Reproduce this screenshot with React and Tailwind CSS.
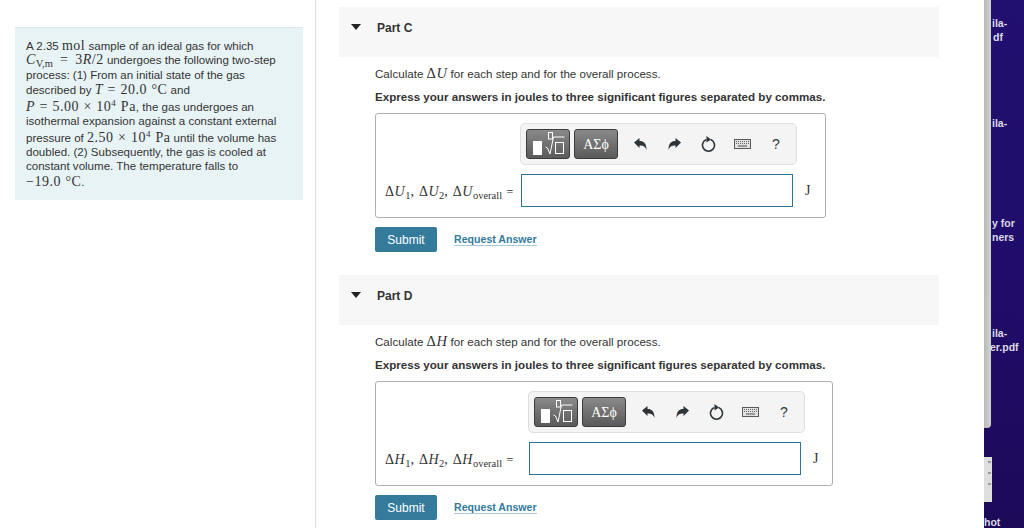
import React from 'react'

const Serif = ({ children, className = 'text-[14px]' }) => (
  <span className={`font-['Liberation_Serif',serif] tracking-[0.5px] [word-spacing:0.5px] ${className}`}>{children}</span>
)

const I = ({ children }) => <i className="font-['Liberation_Serif',serif]">{children}</i>

const Sub = ({ children }) => <sub className="static align-[-3px] text-[10.5px] not-italic leading-none tracking-normal">{children}</sub>

const Sup = ({ children }) => <sup className="static align-[5px] text-[9px] leading-none">{children}</sup>

const statement = [
  { h: 'h-[14px]', body: <>A 2.35 <Serif>mol</Serif> sample of an ideal gas for which</> },
  { h: 'h-[16px]', body: <><Serif><I>C</I><Sub>V,m</Sub><span className="mx-[7px]">=</span>3<I>R</I>/2</Serif> undergoes the following two-step</> },
  { h: 'h-[14px]', body: <>process: (1) From an initial state of the gas</> },
  { h: 'h-[17px]', body: <>described by <Serif><I>T</I> = 20.0 °C</Serif> and</> },
  { h: 'h-[15px]', body: <><Serif><I>P</I> = 5.00 × 10<Sup>4</Sup> Pa</Serif>, the gas undergoes an</> },
  { h: 'h-[16px]', body: <>isothermal expansion against a constant external</> },
  { h: 'h-[15px]', body: <>pressure of <Serif>2.50 × 10<Sup>4</Sup> Pa</Serif> until the volume has</> },
  { h: 'h-[14px]', body: <>doubled. (2) Subsequently, the gas is cooled at</> },
  { h: 'h-[15px]', body: <>constant volume. The temperature falls to</> },
  { h: 'h-[15px]', body: <><Serif>−19.0 °C</Serif>.</> },
]

const TemplateIcon = () => (
  <svg width="42" height="30" viewBox="0 0 42 30">
    <rect x="6" y="12" width="9" height="14" fill="#fff" />
    <rect x="21.5" y="3.5" width="4" height="6.5" fill="none" stroke="#fff" strokeWidth="1" />
    <path d="M18.5 18l2 1 2.5 6 3.5-17h11" fill="none" stroke="#fff" strokeWidth="1" />
    <rect x="28.5" y="13.5" width="8" height="11" fill="none" stroke="#fff" strokeWidth="1" />
  </svg>
)

const Undo = () => (
  <svg width="13" height="12" viewBox="0 0 13 12">
    <path d="M0 4.5L5.5 0v3c4.5 0 7 2.6 7 9-1-3.4-3-4.6-7-4.6V10z" fill="#2f3438" />
  </svg>
)

const Redo = () => (
  <svg width="13" height="12" viewBox="0 0 13 12">
    <path d="M13 4.5L7.5 0v3C3 3 .5 5.6.5 12c1-3.4 3-4.6 7-4.6V10z" fill="#2f3438" />
  </svg>
)

const Reset = () => (
  <svg width="15" height="16" viewBox="0 0 15 16">
    <path d="M9.6 3.6a6 6 0 1 1-4.2 0" fill="none" stroke="#2f3438" strokeWidth="1.6" />
    <path d="M5.5 0L10 3.4 5.5 6.4z" fill="#2f3438" />
  </svg>
)

const Keyboard = () => (
  <svg width="17" height="10" viewBox="0 0 17 10">
    <rect x="0.5" y="0.5" width="16" height="9" fill="#e2e2e2" stroke="#5a5a5a" />
    <path d="M2 2.5h13M2 4.5h13" stroke="#666" strokeWidth="1" strokeDasharray="1 1" />
    <path d="M4 7h9" stroke="#666" strokeWidth="1.2" />
  </svg>
)

const Toolbar = ({ margin }) => (
  <div className={`flex h-[42px] w-[277px] items-center rounded-[5px] border border-[#dedede] bg-[#f4f4f4] pl-[5px] ${margin}`}>
    <div className="flex h-[30px] w-[44px] items-center justify-center rounded-[3px] border border-[#3c3c3c] bg-gradient-to-b from-[#8a8a8a] to-[#5a5a5a]">
      <TemplateIcon />
    </div>
    <div className="ml-[4px] flex h-[30px] w-[44px] items-center justify-center rounded-[3px] border border-[#3c3c3c] bg-gradient-to-b from-[#8a8a8a] to-[#5a5a5a] font-['Liberation_Serif',serif] text-[14px] text-white">
      AΣϕ
    </div>
    <div className="ml-[16px] flex w-[13px] justify-center"><Undo /></div>
    <div className="ml-[21px] flex w-[13px] justify-center"><Redo /></div>
    <div className="ml-[20px] flex w-[15px] justify-center"><Reset /></div>
    <div className="ml-[18px] flex w-[17px] justify-center"><Keyboard /></div>
    <div className="ml-[21px] text-[14px] text-[#33393d]">?</div>
  </div>
)

const Part = ({ title, symbol, label, boxWidth, toolbarMargin, labelWidth, marginTop }) => (
  <section className={marginTop}>
    <div className="flex h-[50px] w-[600px] items-start bg-[#f7f7f7] pt-[14px]">
      <span className="ml-[12px] mt-[3px] h-0 w-0 border-x-[5px] border-t-[6px] border-x-transparent border-t-[#222]" />
      <h2 className="ml-[16px] text-[12px] font-bold leading-[14px] text-[#333]">{title}</h2>
    </div>
    <div className="ml-[36px]">
      <p className="mt-[8px] h-[17px] text-[11.6px] leading-[17px] text-[#333]">
        Calculate <Serif className="text-[14.5px]">Δ<I>{symbol}</I></Serif> for each step and for the overall process.
      </p>
      <p className="mt-[7px] h-[16px] text-[11.6px] font-bold leading-[16px] text-[#333]">
        Express your answers in joules to three significant figures separated by commas.
      </p>
      <div className={`mt-[8px] flex h-[105px] flex-col rounded-[3px] border border-[#aeaeae] bg-white ${boxWidth}`}>
        <Toolbar margin={toolbarMargin} />
        <div className="mt-[9px] flex items-center pl-[9px]">
          <div className={`whitespace-nowrap text-[#333] ${labelWidth}`}>{label}</div>
          <div className="h-[33px] w-[272px] border border-[#2f7396] bg-white" />
          <span className="ml-[12px] font-['Liberation_Serif',serif] text-[14px] text-[#333]">J</span>
        </div>
      </div>
      <div className="mt-[9px] flex items-center">
        <button className="h-[25px] w-[62px] rounded-[2px] bg-[#337a9b] text-[12px] text-white">Submit</button>
        <a className="ml-[17px] border-b border-[#a9c8d8] text-[10.6px] font-bold leading-[11px] text-[#337a9b]">Request Answer</a>
      </div>
    </div>
  </section>
)

const UVars = () => (
  <Serif className="text-[14px]">
    Δ<I>U</I><Sub>1</Sub>, Δ<I>U</I><Sub>2</Sub>, Δ<I>U</I><Sub>overall</Sub> <span className="text-[12px]">=</span>
  </Serif>
)

const HVars = () => (
  <Serif className="text-[14px]">
    Δ<I>H</I><Sub>1</Sub>, Δ<I>H</I><Sub>2</Sub>, Δ<I>H</I><Sub>overall</Sub> <span className="text-[12px]">=</span>
  </Serif>
)

const desktopLabels = [
  { text: 'ila-', pos: 'top-[16px] left-[0px]' },
  { text: 'df', pos: 'top-[30px] left-[1px]' },
  { text: 'ila-', pos: 'top-[116px] left-[0px]' },
  { text: 'y for', pos: 'top-[216px] left-[0px]' },
  { text: 'ners', pos: 'top-[230px] left-[0px]' },
]

export default function App() {
  return (
    <div className="flex h-[528px] w-[1024px] overflow-hidden bg-white font-['Liberation_Sans',sans-serif]">
      <aside className="h-full w-[316px] shrink-0 border-r border-[#dcdcdc] pl-[15px] pt-[27px]">
        <div className="h-[173px] w-[288px] border-t border-[#dfe9ec] bg-[#e8f3f6] pl-[11px] pt-[10px] text-[11.55px] text-[#333]">
          {statement.map((line, i) => (
            <div key={i} className={`${line.h} whitespace-nowrap leading-[15px]`}>{line.body}</div>
          ))}
        </div>
      </aside>

      <main className="h-full w-[668px] shrink-0 pl-[23px] pt-[7px]">
        <Part
          title="Part C"
          symbol="U"
          label={<UVars />}
          boxWidth="w-[451px]"
          toolbarMargin="ml-[144px] mt-[9px]"
          labelWidth="w-[136px]"
        />
        <Part
          title="Part D"
          symbol="H"
          label={<HVars />}
          boxWidth="w-[458px]"
          toolbarMargin="ml-[152px] mt-[9px]"
          labelWidth="w-[144px]"
          marginTop="mt-[23px]"
        />
      </main>

      <div className="relative h-full flex-1 bg-gradient-to-b from-[#21106f] via-[#200d6b] to-[#1b0a58] text-[10.5px] font-bold text-[#dcdae6]">
        <div className="absolute left-0 top-0 h-[428px] w-[7px] rounded-br-[4px] bg-gradient-to-r from-[#b9b9b9] to-[#d2d2d2]" />
        {desktopLabels.map((label) => (
          <span key={label.pos} className={`absolute ml-[8px] ${label.pos}`}>{label.text}</span>
        ))}
        <span className="absolute left-[8px] top-[326px]">ila-</span>
        <span className="absolute left-[6px] top-[340px]">er.pdf</span>
        <div className="absolute left-0 top-[457px] flex h-[45px] w-[8px] flex-col items-end gap-[9px] bg-[#dedede] pr-[1px] pt-[4px]">
          <span className="h-[2px] w-[3px] bg-[#9a9a9a]" />
          <span className="h-[2px] w-[3px] bg-[#9a9a9a]" />
          <span className="h-[2px] w-[3px] bg-[#9a9a9a]" />
        </div>
        <span className="absolute left-0 top-[515px]">hot</span>
      </div>
    </div>
  )
}
